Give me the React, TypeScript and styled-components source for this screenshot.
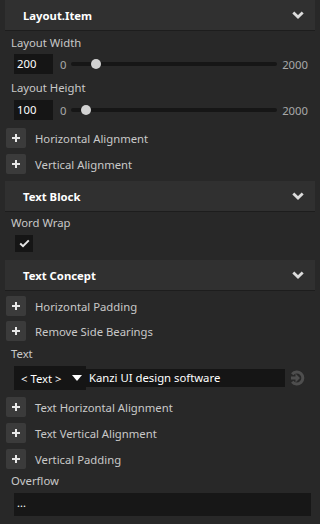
import styled, { createGlobalStyle } from "styled-components";

const GlobalStyle = createGlobalStyle`
  html, body {
    margin: 0;
    padding: 0;
    background: #282828;
  }
  * {
    box-sizing: border-box;
  }
`;

const Panel = styled.div`
  width: 320px;
  height: 524px;
  background: #282828;
  padding: 0 5px;
  font-family: "Noto Sans", "Open Sans", sans-serif;
  font-size: 11.3px;
  color: #c9c9c9;
  overflow: hidden;
`;

const SectionHeader = styled.div`
  height: 31px;
  display: flex;
  align-items: center;
  justify-content: space-between;
  padding: 0 11px 0 18px;
  background: #303030;
  border-bottom: 1px solid #1d1d1d;
  color: #ffffff;
  font-weight: 700;
  font-size: 11.3px;
`;

const SectionBody = styled.div<{ $top: number; $bottom: number }>`
  display: flex;
  flex-direction: column;
  align-items: stretch;
  padding: ${(p) => p.$top}px 0 ${(p) => p.$bottom}px 1px;
`;

const Label = styled.div<{ $mt?: number }>`
  height: 16px;
  line-height: 16px;
  padding-left: 5px;
  margin-top: ${(p) => p.$mt ?? 0}px;
  color: #c9c9c9;
`;

const SliderRow = styled.div<{ $mt: number }>`
  display: flex;
  align-items: center;
  height: 20px;
  margin-top: ${(p) => p.$mt}px;
  padding-left: 8px;
  color: #a8a8a8;
`;

const NumberBox = styled.div`
  width: 39px;
  height: 20px;
  line-height: 20px;
  padding-left: 3px;
  background: #151515;
  color: #ffffff;
`;

const RangeEnd = styled.span<{ $left: number; $right: number }>`
  margin: 0 ${(p) => p.$right}px 0 ${(p) => p.$left}px;
`;

const Track = styled.div`
  position: relative;
  flex: 1;
  height: 4px;
  border-radius: 2px;
  background: #161616;
`;

const Thumb = styled.div`
  position: absolute;
  top: -3px;
  width: 10px;
  height: 10px;
  border-radius: 50%;
  background: #d2d2d2;
`;

const PlusRow = styled.div<{ $mt: number }>`
  display: flex;
  align-items: center;
  height: 20px;
  margin-top: ${(p) => p.$mt}px;
  gap: 9px;
`;

const PlusButton = styled.div`
  width: 20px;
  height: 20px;
  border-radius: 2px;
  background: #3b3b3b;
  display: flex;
  align-items: center;
  justify-content: center;
`;

const CheckBox = styled.div`
  width: 18px;
  height: 17px;
  margin: 4px 0 0 9px;
  background: #151515;
  display: flex;
  align-items: center;
  justify-content: center;
`;

const TextRow = styled.div`
  display: flex;
  align-items: center;
  height: 24px;
  margin-top: 4px;
  padding-left: 8px;
`;

const Dropdown = styled.div`
  width: 72px;
  height: 24px;
  background: #151515;
  color: #ffffff;
  display: flex;
  align-items: center;
  justify-content: space-between;
  padding: 0 4px 0 7px;
`;

const TextInput = styled.div`
  width: 199px;
  height: 18px;
  line-height: 18px;
  background: #151515;
  color: #ffffff;
  padding-left: 3px;
`;

const GoIcon = styled.div`
  margin-left: 4px;
  width: 16px;
  height: 16px;
  display: flex;
`;

const OverflowField = styled.div`
  height: 23px;
  margin: 4px 4px 0 8px;
  background: #171717;
  color: #ffffff;
  padding-left: 3px;
  line-height: 20px;
  font-size: 11px;
`;

const Chevron = () => (
  <svg width="12" height="8" viewBox="0 0 12 8">
    <path d="M1.3 1.5 L6 6 L10.7 1.5" fill="none" stroke="#dcdcdc" strokeWidth="2.8" />
  </svg>
);

const Plus = () => (
  <svg width="10" height="10" viewBox="0 0 10 10">
    <path d="M5 1 V9 M1 5 H9" stroke="#e8e8e8" strokeWidth="2" />
  </svg>
);

const Check = () => (
  <svg width="11" height="9" viewBox="0 0 11 9">
    <path d="M1.2 4.6 L4 7.2 L9.8 1.4" fill="none" stroke="#e6e6e6" strokeWidth="2" />
  </svg>
);

const Caret = () => (
  <svg width="10" height="6" viewBox="0 0 10 6">
    <path d="M0 0 H10 L5 6 Z" fill="#ffffff" />
  </svg>
);

const GoArrow = () => (
  <svg width="16" height="16" viewBox="0 0 16 16">
    <path d="M3.2 4.2 A6 6 0 1 1 3.2 11.8" fill="none" stroke="#4e4e4e" strokeWidth="3" />
    <path d="M2 6.5 H6.5 V3.5 L11 8 L6.5 12.5 V9.5 H2 Z" fill="#4e4e4e" />
  </svg>
);

type SliderProps = { label: string; value: number; max: number; labelTop: number; rowTop: number };

const Slider = ({ label, value, max, labelTop, rowTop }: SliderProps) => {
  const pct = value / max;
  return (
    <>
      <Label $mt={labelTop}>{label}</Label>
      <SliderRow $mt={rowTop}>
        <NumberBox>{value}</NumberBox>
        <RangeEnd $left={7} $right={5}>0</RangeEnd>
        <Track>
          <Thumb style={{ left: `calc(${pct} * (100% - 10px))` }} />
        </Track>
        <RangeEnd $left={5} $right={7}>{max}</RangeEnd>
      </SliderRow>
    </>
  );
};

const PlusItem = ({ text, mt }: { text: string; mt: number }) => (
  <PlusRow $mt={mt}>
    <PlusButton>
      <Plus />
    </PlusButton>
    <span>{text}</span>
  </PlusRow>
);

const Header = ({ title }: { title: string }) => (
  <SectionHeader>
    <span>{title}</span>
    <Chevron />
  </SectionHeader>
);

export default function App() {
  return (
    <>
      <GlobalStyle />
      <Panel>
        <Header title="Layout.Item" />
        <SectionBody $top={4} $bottom={7}>
          <Slider label="Layout Width" value={200} max={2000} labelTop={0} rowTop={3} />
          <Slider label="Layout Height" value={100} max={2000} labelTop={6} rowTop={4} />
          <PlusItem text="Horizontal Alignment" mt={8} />
          <PlusItem text="Vertical Alignment" mt={6} />
        </SectionBody>

        <Header title="Text Block" />
        <SectionBody $top={3} $bottom={8}>
          <Label>Word Wrap</Label>
          <CheckBox>
            <Check />
          </CheckBox>
        </SectionBody>

        <Header title="Text Concept" />
        <SectionBody $top={5} $bottom={0}>
          <PlusItem text="Horizontal Padding" mt={0} />
          <PlusItem text="Remove Side Bearings" mt={5} />
          <Label $mt={5}>Text</Label>
          <TextRow>
            <Dropdown>
              <span>&lt; Text &gt;</span>
              <Caret />
            </Dropdown>
            <TextInput>Kanzi UI design software</TextInput>
            <GoIcon>
              <GoArrow />
            </GoIcon>
          </TextRow>
          <PlusItem text="Text Horizontal Alignment" mt={7} />
          <PlusItem text="Text Vertical Alignment" mt={6} />
          <PlusItem text="Vertical Padding" mt={6} />
          <Label $mt={4}>Overflow</Label>
          <OverflowField>...</OverflowField>
        </SectionBody>
      </Panel>
    </>
  );
}
